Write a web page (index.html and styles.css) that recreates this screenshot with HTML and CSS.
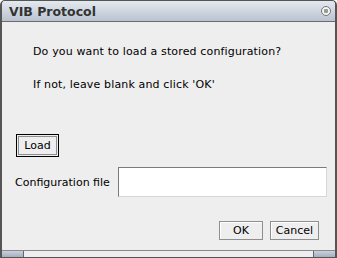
FILE: index.html
```html
<!DOCTYPE html>
<html lang="en">
<head>
    <meta charset="UTF-8">
    <title>VIB Protocol</title>
    <link rel="stylesheet" href="styles.css">
</head>
<body>
    <div class="window">
        <div class="titlebar">
            <span class="title">VIB Protocol</span>
            <span class="close"></span>
        </div>
        <div class="content">
            <p class="msg first">Do you want to load a stored configuration?</p>
            <p class="msg">If not, leave blank and click 'OK'</p>
            <button type="button" class="btn load">Load</button>
            <div class="fileRow">
                <label for="configFile">Configuration file</label>
                <input type="text" id="configFile">
            </div>
            <div class="actions">
                <button type="button" class="btn ok">OK</button>
                <button type="button" class="btn cancel">Cancel</button>
            </div>
        </div>
        <div class="bottomEdge">
            <span class="corner left"></span>
            <span class="corner right"></span>
        </div>
    </div>
</body>
</html>
```

FILE: styles.css
```css
body {
    margin: 0;
    font-family: "DejaVu Sans", sans-serif;
    font-size: 11px;
    color: #000;
}
.window {
    width: 337px;
    height: 258px;
    box-sizing: border-box;
    border: 1px solid #555;
    border-left-width: 2px;
    border-right-width: 2px;
    border-radius: 5px 5px 0 0;
    background-color: #eeeeee;
    display: flex;
    flex-direction: column;
    overflow: hidden;
}
.titlebar {
    height: 20px;
    display: flex;
    align-items: center;
    justify-content: space-between;
    padding: 0 4px 0 7px;
    background: linear-gradient(#e4e9ef, #b9c3d0);
    border-bottom: 1px solid #6b6b6b;
}
.title {
    font-weight: bold;
    font-size: 12.5px;
    color: #333;
}
.close {
    width: 8px;
    height: 8px;
    border-radius: 50%;
    border: 1px solid #777;
    background: radial-gradient(circle, #9a9a9a 0 2px, #f4f4f4 2.5px);
}
.content {
    flex: 1;
    display: flex;
    flex-direction: column;
    padding: 0 7px 0 13px;
}
.msg {
    margin: 0 0 0 18px;
    line-height: 16px;
    letter-spacing: 0.15px;
}
.msg.first {
    margin-top: 22px;
    margin-bottom: 17px;
}
.btn {
    font-family: "DejaVu Sans", sans-serif;
    font-size: 11px;
    color: #000;
    background: #eeeeee;
    border: 1px solid #8e8e8e;
    box-shadow: inset 1px 1px 0 #fff;
    padding: 0;
    height: 19px;
}
.load {
    align-self: flex-start;
    margin-top: 41px;
    width: 43px;
    height: 23px;
    border: 1px solid #000;
    outline: 1px solid #8e8e8e;
    outline-offset: -3px;
    box-shadow: none;
    margin-left: 1px;
}
.fileRow {
    display: flex;
    align-items: center;
    gap: 8px;
    margin-top: 10px;
}
.fileRow label {
    font-size: 11px;
}
.fileRow input {
    width: 209px;
    height: 30px;
    box-sizing: border-box;
    border: 1px solid #d6d6d6;
    border-top-color: #7a7a7a;
    border-left-color: #7a7a7a;
    background: #fff;
}
.actions {
    display: flex;
    justify-content: flex-end;
    gap: 7px;
    margin-top: 24px;
    padding-right: 9px;
}
.ok {
    width: 44px;
}
.cancel {
    width: 49px;
}
.bottomEdge {
    height: 6px;
    border-top: 1px solid #8a8a8a;
    display: flex;
    justify-content: space-between;
    background: #eeeeee;
}
.corner {
    width: 21px;
    background: linear-gradient(#c9d1dc, #a4afbe);
    border-right: 1px solid #666;
}
.corner.right {
    border-right: none;
    border-left: 1px solid #666;
}
```
